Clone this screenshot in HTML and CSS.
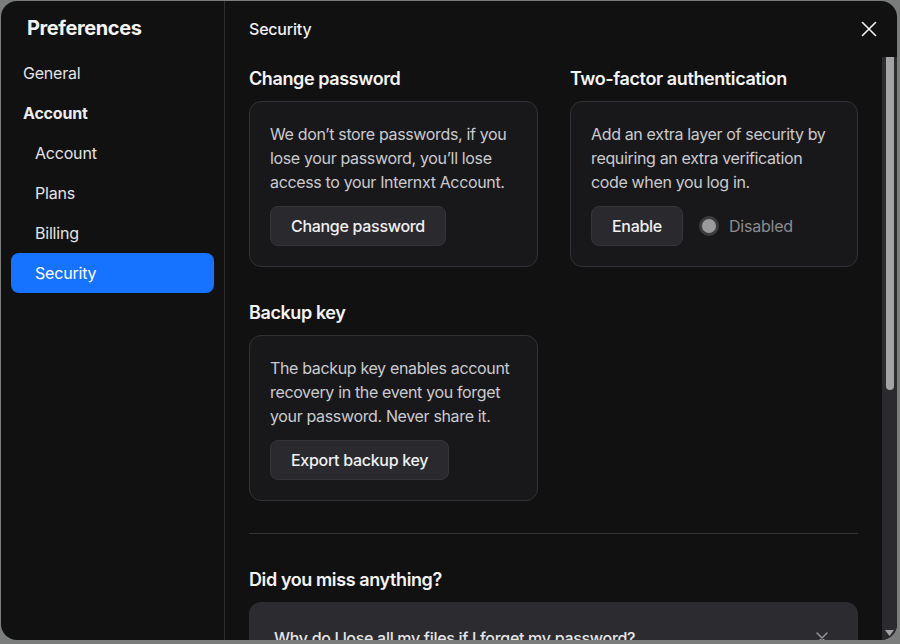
FILE: index.html
```html
<!DOCTYPE html>
<html lang="en">
<head>
<meta charset="utf-8">
<title>Preferences</title>
<link rel="stylesheet" href="styles.css">
</head>
<body>
<div class="dialog">
  <aside class="sidebar">
    <h1 class="title">Preferences</h1>
    <nav class="nav">
      <div class="nav-item">General</div>
      <div class="nav-item nav-group">Account</div>
      <div class="nav-item nav-sub">Account</div>
      <div class="nav-item nav-sub">Plans</div>
      <div class="nav-item nav-sub">Billing</div>
      <div class="nav-item nav-sub active">Security</div>
    </nav>
  </aside>
  <main class="main">
    <header class="main-header">
      <span class="main-title">Security</span>
      <svg class="close" width="16" height="16" viewBox="0 0 16 16" fill="none" stroke="#f2f2f2" stroke-width="1.6" stroke-linecap="round"><path d="M1.5 1.5L14.5 14.5M14.5 1.5L1.5 14.5"/></svg>
    </header>
    <div class="scroll">
      <div class="content">
        <div class="grid">
          <section class="section">
            <h2 class="heading">Change password</h2>
            <div class="card">
              <p class="card-text">We don’t store passwords, if you lose your password, you’ll lose access to your Internxt Account.</p>
              <div class="actions"><button class="btn">Change password</button></div>
            </div>
          </section>
          <section class="section">
            <h2 class="heading">Two-factor authentication</h2>
            <div class="card">
              <p class="card-text">Add an extra layer of security by requiring an extra verification code when you log in.</p>
              <div class="actions">
                <button class="btn">Enable</button>
                <span class="status"><span class="dot"></span>Disabled</span>
              </div>
            </div>
          </section>
          <section class="section">
            <h2 class="heading">Backup key</h2>
            <div class="card">
              <p class="card-text">The backup key enables account recovery in the event you forget your password. Never share it.</p>
              <div class="actions"><button class="btn">Export backup key</button></div>
            </div>
          </section>
        </div>
        <hr class="divider">
        <h2 class="heading faq-heading">Did you miss anything?</h2>
        <div class="faq">
          <span class="faq-q">Why do I lose all my files if I forget my password?</span>
          <svg class="faq-x" width="12" height="12" viewBox="0 0 12 12" fill="none" stroke="#9a9a9e" stroke-width="1.4" stroke-linecap="round"><path d="M1 1L11 11M11 1L1 11"/></svg>
        </div>
      </div>
      <div class="scrollbar">
        <div class="thumb"></div>
        <div class="track"></div>
        <svg class="arrow" width="9" height="6" viewBox="0 0 9 6"><path d="M0 0H9L4.5 6Z" fill="#a3a3a3"/></svg>
      </div>
    </div>
  </main>
</div>
</body>
</html>
```
FILE: styles.css
```css
* { box-sizing: border-box; }
html, body { margin: 0; padding: 0; }
body {
  width: 900px;
  height: 644px;
  background: #7b7c7c;
  font-family: Inter, "Noto Sans", sans-serif;
  color: #e8e8ea;
  overflow: hidden;
}
.dialog {
  margin: 1px 3px 0 1px;
  width: 896px;
  height: 639px;
  background: #111111;
  border-radius: 16px;
  display: flex;
  overflow: hidden;
}
.sidebar {
  width: 224px;
  flex: none;
  border-right: 1px solid #2c2c2e;
  padding: 0 10px;
}
.title {
  margin: 0;
  padding: 15px 0 0 16px;
  height: 52px;
  font-size: 20px;
  line-height: 24px;
  font-weight: 700;
  letter-spacing: -0.4px;
  color: #f4f4f5;
}
.nav { display: flex; flex-direction: column; }
.nav-item {
  height: 40px;
  line-height: 40px;
  padding-left: 12px;
  font-size: 16px;
  color: #e4e4e7;
  border-radius: 8px;
  letter-spacing: -0.2px;
}
.nav-group { font-weight: 700; color: #ececee; }
.nav-sub { padding-left: 24px; }
.active { background: #1673ff; color: #ffffff; }
.main {
  flex: 1;
  display: flex;
  flex-direction: column;
  min-width: 0;
}
.main-header {
  height: 56px;
  flex: none;
  display: flex;
  align-items: center;
  justify-content: space-between;
  padding: 0 20px 0 24px;
}
.main-title {
  font-size: 16px;
  font-weight: 500;
  color: #f0f0f2;
  letter-spacing: -0.2px;
}
.close { display: block; }
.scroll {
  flex: 1;
  display: flex;
  min-height: 0;
}
.content {
  flex: 1;
  padding: 10px 24px 0 24px;
  overflow: hidden;
}
.grid {
  display: grid;
  grid-template-columns: 289px 288px;
  column-gap: 32px;
  row-gap: 34px;
}
.heading {
  margin: 0 0 10px 0;
  font-size: 18px;
  line-height: 24px;
  font-weight: 600;
  color: #f4f4f5;
  letter-spacing: -0.4px;
}
.card {
  height: 166px;
  border: 1px solid #323236;
  background: #18181a;
  border-radius: 12px;
  padding: 20px;
}
.card-text {
  margin: 0;
  font-size: 16px;
  line-height: 24px;
  color: #cbcbcf;
  letter-spacing: -0.35px;
}
.actions {
  margin-top: 12px;
  display: flex;
  align-items: center;
}
.btn {
  height: 40px;
  padding: 0 20px;
  border: 1px solid #35353a;
  background: #2a2a2e;
  border-radius: 8px;
  font-family: inherit;
  font-size: 16px;
  font-weight: 500;
  color: #f0f0f2;
  letter-spacing: -0.3px;
}
.status {
  display: flex;
  align-items: center;
  margin-left: 16px;
  font-size: 16px;
  color: #8c8c90;
  letter-spacing: -0.2px;
}
.dot {
  width: 20px;
  height: 20px;
  border-radius: 50%;
  background: #9a9a9c;
  border: 3px solid #3c3c3f;
  margin-right: 10px;
}
.divider {
  margin: 32px 0 0 0;
  border: 0;
  border-top: 1px solid #323236;
}
.faq-heading { margin-top: 34px; margin-bottom: 10px; }
.faq {
  height: 80px;
  background: #2c2c30;
  border-radius: 12px 12px 0 0;
  display: flex;
  justify-content: space-between;
  padding: 24px 30px 0 25px;
}
.faq-q {
  font-size: 16px;
  line-height: 24px;
  font-weight: 500;
  color: #e6e6e8;
  letter-spacing: -0.3px;
}
.faq-x { margin-top: 6px; }
.scrollbar {
  width: 15px;
  flex: none;
  background: #2b2b2f;
  display: flex;
  flex-direction: column;
  align-items: center;
  padding: 0 0 4px 0;
}
.thumb {
  width: 8px;
  height: 333px;
  background: #a3a3a3;
  border-radius: 0 0 4px 4px;
}
.track { flex: 1; }
.arrow { display: block; }
```
